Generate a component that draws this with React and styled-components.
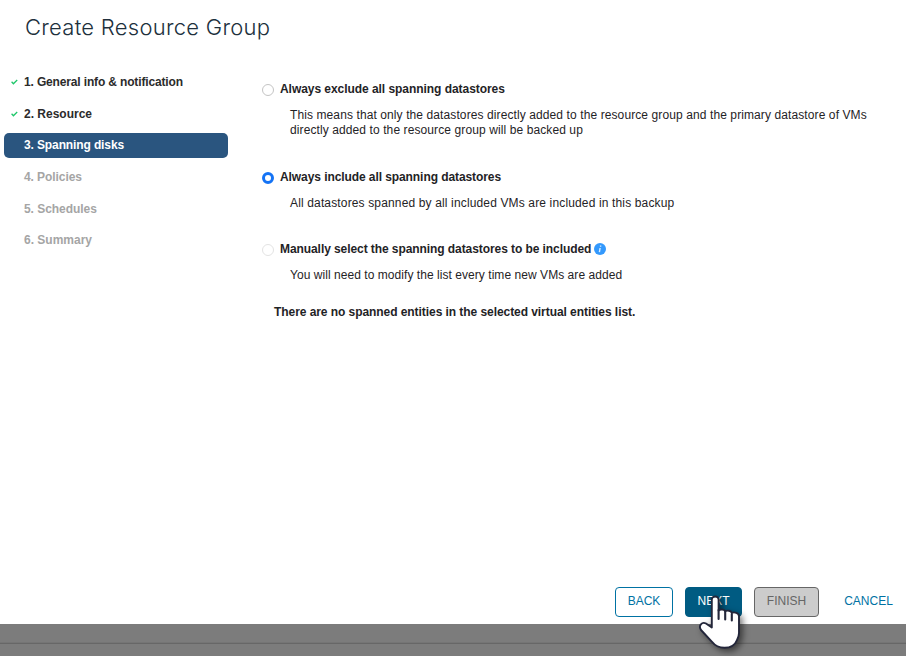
import React from "react";
import styled, { createGlobalStyle } from "styled-components";

const GlobalStyle = createGlobalStyle`
  *, *::before, *::after { box-sizing: border-box; }
  body {
    margin: 0;
    background: #7c7c7c;
    font-family: "Liberation Sans", Arial, sans-serif;
    font-size: 12px;
    color: #1f2326;
    overflow: hidden;
  }
`;

const Screen = styled.div`
  height: 656px;
  display: flex;
  flex-direction: column;
`;

const Dialog = styled.main`
  height: 624px;
  background: #fff;
  display: flex;
  flex-direction: column;
`;

const Title = styled.h1`
  margin: 0;
  height: 70px;
  padding: 12px 0 0 25px;
  font: 300 22px/30px Inter, Lato, sans-serif;
  letter-spacing: 0.27px;
  color: #20303c;
  white-space: nowrap;
`;

const Body = styled.div`
  display: flex;
  flex: 1;
`;

const Steps = styled.nav`
  width: 228px;
  padding: 0.25px 0 0 4px;
  display: grid;
  grid-auto-rows: 25px;
  row-gap: 6.6px;
  align-content: start;
  flex: none;
`;

const stepColors = { done: "#2b2b2b", active: "#fff", pending: "#a5a5a5" };

const Step = styled.div`
  display: flex;
  align-items: center;
  padding-bottom: 1px;
  border-radius: 5px;
  font-weight: bold;
  white-space: nowrap;
  letter-spacing: ${(p) => p.$spacing}px;
  color: ${(p) => stepColors[p.$state]};
  background: ${(p) => (p.$state === "active" ? "#2a557f" : "transparent")};
`;

const StepMark = styled.span`
  width: 20px;
  padding-left: 7px;
  display: flex;
`;

const Options = styled.section`
  padding: 12px 0 0 34px;
  flex: 1;
`;

const Option = styled.div`
  height: ${(p) => p.$height}px;
`;

const OptionLabel = styled.label`
  display: flex;
  align-items: center;
  height: 14px;
  font-weight: bold;
  white-space: nowrap;
  letter-spacing: ${(p) => p.$spacing}px;
`;

const Radio = styled.span`
  width: 12px;
  height: 12px;
  flex: none;
  margin: 2px 6px 0 0;
  border-radius: 50%;
  background: #fff;
  border: ${(p) => (p.$checked ? "3px solid #1473f5" : `1px solid ${p.$disabled ? "#e3e3e3" : "#c4c4c4"}`)};
`;

const Description = styled.p`
  margin: 12px 0 0 28px;
  line-height: 15px;
  white-space: pre;
  letter-spacing: ${(p) => p.$spacing}px;
`;

const Notice = styled.p`
  margin: 0 0 0 12px;
  line-height: 14px;
  font-weight: bold;
  letter-spacing: -0.062px;
`;

const InfoSvg = styled.svg`
  margin-left: 3px;
`;

const Footer = styled.footer`
  height: 37px;
  display: flex;
  align-items: flex-start;
  gap: 12px;
  padding-left: 615px;
`;

const buttonLooks = {
  outline: "color:#0072a3;border-color:#0072a3;background:#fff;",
  primary: "color:#fff;border-color:#005b82;background:#005b82;",
  disabled: "color:#666;border-color:#666;background:#ccc;",
  link: "color:#0072a3;border-color:transparent;background:transparent;",
};

const Button = styled.button`
  width: ${(p) => p.$width}px;
  flex: none;
  height: 30px;
  padding: 0 0 2px;
  border: 1px solid;
  border-radius: 4px;
  font: 12px "Liberation Sans", Arial, sans-serif;
  ${(p) => buttonLooks[p.$look]}
`;

const Backdrop = styled.div`
  height: 32px;
  display: grid;
  grid-template-rows: 18px 2px 1fr;
`;

const BackdropLine = styled.div`
  grid-row: 2;
  background: linear-gradient(#757575 50%, #676767 50%);
`;

const Cursor = styled.svg`
  position: absolute;
  left: 696px;
  top: 592px;
  filter: drop-shadow(3px 3px 3px rgba(0, 0, 0, 0.5));
`;

const steps = [
  ["1. General info & notification", "done", -0.15],
  ["2. Resource", "done", 0],
  ["3. Spanning disks", "active", -0.12],
  ["4. Policies", "pending", -0.08],
  ["5. Schedules", "pending", -0.05],
  ["6. Summary", "pending", 0],
];

const Check = () => (
  <svg width="7" height="6" viewBox="0 0 7 6" fill="none" stroke="#1fc76a" strokeWidth="1.3">
    <path d="M.6 2.8 2.4 4.7 6.2 1" />
  </svg>
);

const Info = () => (
  <InfoSvg width="12" height="12" viewBox="0 0 12 12">
    <circle cx="6" cy="6" r="6" fill="#3399fd" />
    <path d="M6.6 2.5v1.3M6.1 5 5.4 9.2" stroke="#d9edff" strokeWidth="1.4" />
  </InfoSvg>
);

export default function App() {
  return (
    <Screen>
      <GlobalStyle />
      <Dialog>
        <Title>Create Resource Group</Title>
        <Body>
          <Steps>
            {steps.map(([label, state, spacing]) => (
              <Step key={label} $state={state} $spacing={spacing}>
                <StepMark>{state === "done" && <Check />}</StepMark>
                {label}
              </Step>
            ))}
          </Steps>
          <Options>
            <Option $height={88}>
              <OptionLabel $spacing={-0.05}><Radio />Always exclude all spanning datastores</OptionLabel>
              <Description $spacing={0.1}>{"This means that only the datastores directly added to the resource group and the primary datastore of VMs\ndirectly added to the resource group will be backed up"}</Description>
            </Option>
            <Option $height={72}>
              <OptionLabel $spacing={-0.08}><Radio $checked />Always include all spanning datastores</OptionLabel>
              <Description $spacing={0.145}>All datastores spanned by all included VMs are included in this backup</Description>
            </Option>
            <Option $height={63}>
              <OptionLabel $spacing={-0.077}><Radio $disabled />Manually select the spanning datastores to be included<Info /></OptionLabel>
              <Description $spacing={0.05}>You will need to modify the list every time new VMs are added</Description>
            </Option>
            <Notice>There are no spanned entities in the selected virtual entities list.</Notice>
          </Options>
        </Body>
        <Footer>
          <Button $look="outline" $width={58}>BACK</Button>
          <Button $look="primary" $width={57}>NEXT</Button>
          <Button $look="disabled" $width={65}>FINISH</Button>
          <Button $look="link" $width={75}>CANCEL</Button>
        </Footer>
      </Dialog>
      <Backdrop><BackdropLine /></Backdrop>
      <Cursor width="52" height="62" viewBox="0 0 52 62">
        <path
          d="M15.800 7.500c0-4 6.800-4 6.800 0V18.500c1.500-1.500 5.800-1.300 6.600.8 2-1.300 6-.6 6.600 1.600 2.500-1.200 7.200 0 7.200 3.400V41c0 3-.8 4.500-2 7-2 5.300-6.500 7.800-12.500 7.800-6 0-9.500-2-12.500-6L5 38c-3-4.500 1-8.500 5-6.500l5.800 4Z"
          fill="#fff" stroke="#23263a" strokeWidth="1.900" strokeLinejoin="round"
        />
        <path d="M22.600 18v9M29.200 20v7.500M35.800 22v6.500" stroke="#23263a" strokeWidth="2.100" strokeLinecap="round" />
      </Cursor>
    </Screen>
  );
}
